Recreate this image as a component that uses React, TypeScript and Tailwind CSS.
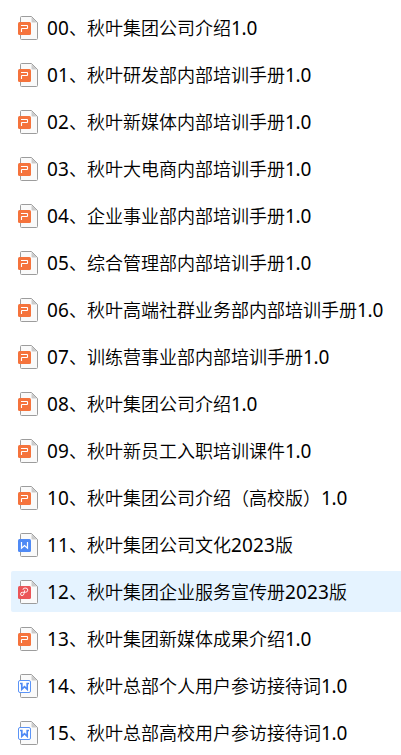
type FileKind = 'ppt' | 'doc' | 'docOutline' | 'pdf'

interface FileItem {
    name: string
    kind: FileKind
    active?: boolean
}

const files: FileItem[] = [
    { name: '00、秋叶集团公司介绍1.0', kind: 'ppt' },
    { name: '01、秋叶研发部内部培训手册1.0', kind: 'ppt' },
    { name: '02、秋叶新媒体内部培训手册1.0', kind: 'ppt' },
    { name: '03、秋叶大电商内部培训手册1.0', kind: 'ppt' },
    { name: '04、企业事业部内部培训手册1.0', kind: 'ppt' },
    { name: '05、综合管理部内部培训手册1.0', kind: 'ppt' },
    { name: '06、秋叶高端社群业务部内部培训手册1.0', kind: 'ppt' },
    { name: '07、训练营事业部内部培训手册1.0', kind: 'ppt' },
    { name: '08、秋叶集团公司介绍1.0', kind: 'ppt' },
    { name: '09、秋叶新员工入职培训课件1.0', kind: 'ppt' },
    { name: '10、秋叶集团公司介绍（高校版）1.0', kind: 'ppt' },
    { name: '11、秋叶集团公司文化2023版', kind: 'doc' },
    { name: '12、秋叶集团企业服务宣传册2023版', kind: 'pdf', active: true },
    { name: '13、秋叶集团新媒体成果介绍1.0', kind: 'ppt' },
    { name: '14、秋叶总部个人用户参访接待词1.0', kind: 'docOutline' },
    { name: '15、秋叶总部高校用户参访接待词1.0', kind: 'docOutline' },
]

function FileIcon({ kind }: { kind: FileKind }) {
    return (
        <svg width="20" height="24" viewBox="0 0 20 24" fill="none" className="mt-px shrink-0">
            {/* Page with folded corner */}
            <path d="M3.5 .5H13.5L19.5 6.5V22.5a1 1 0 0 1-1 1h-15a1 1 0 0 1-1-1v-21a1 1 0 0 1 1-1Z" fill="#fafafa" stroke="#9c9c9c" />
            <path d="M13.5 1V5.5a1 1 0 0 0 1 1H19Z" fill="#cbcbcb" />

            {kind === 'ppt' && (
                <>
                    <rect y="6" width="13" height="13" rx="1.5" fill="#f5733c" />
                    <path d="M3 9.5h6a.5.5 0 0 1 .5.5v2a.5.5 0 0 1-.5.5H4a.5.5 0 0 0-.5.5v3" stroke="#fff" strokeWidth="1.1" />
                </>
            )}
            {kind === 'doc' && (
                <>
                    <rect y="6" width="13" height="13" rx="1.5" fill="#4f8af5" />
                    <path d="M3.5 9v6.2l3-2.7 3 2.7V9" stroke="#fff" strokeWidth="1.2" />
                </>
            )}
            {kind === 'docOutline' && (
                <>
                    <rect x=".5" y="6.5" width="12" height="12" rx="1.5" fill="#fff" stroke="#5b94f7" />
                    <path d="M2 9.5h1.8v5.8l2.7-2.6 2.7 2.6V9.5H11" stroke="#4f8af5" strokeWidth="1.7" />
                </>
            )}
            {kind === 'pdf' && (
                <>
                    <rect y="6" width="13" height="13" rx="1.5" fill="#eb5558" />
                    <path d="M5 9.8q0-1.8 2.2-1.8 2.6 0 2.6 2.1T7.4 12.3H4.2q-1.6 0-1.6 1.7t1.4 1.6q1.5 0 1.9-1.6l.8-3.7" stroke="#fff" strokeWidth=".9" />
                </>
            )}
        </svg>
    )
}

// Numbers are set slightly larger than the Chinese text around them
function FileName({ name }: { name: string }) {
    return (
        <span className="text-[18px] leading-6 whitespace-nowrap">
            {name.split(/([\d.]+)/).map((part, i) =>
                i % 2 === 1 ? (
                    <span
                        key={i}
                        className={`text-[19px] leading-none font-normal ${part.includes('.') ? 'tracking-[-0.27px]' : 'tracking-[0.13px]'}`}
                    >
                        {part}
                    </span>
                ) : (
                    part
                )
            )}
        </span>
    )
}

export default function App() {
    return (
        <div className="h-[755px] w-[401px] overflow-hidden bg-white pt-[7px] pl-[11px] font-['Noto_Sans','Noto_Sans_CJK_SC',sans-serif] font-[360] text-black">
            <ul className="flex flex-col gap-1.5">
                {files.map((file) => (
                    <li
                        key={file.name}
                        className={`flex h-[41px] shrink-0 items-center gap-[9px] rounded-l-xs pl-[7px] ${file.active ? 'bg-[#e5f3ff]' : ''}`}
                    >
                        <FileIcon kind={file.kind} />
                        <FileName name={file.name} />
                    </li>
                ))}
            </ul>
        </div>
    )
}
